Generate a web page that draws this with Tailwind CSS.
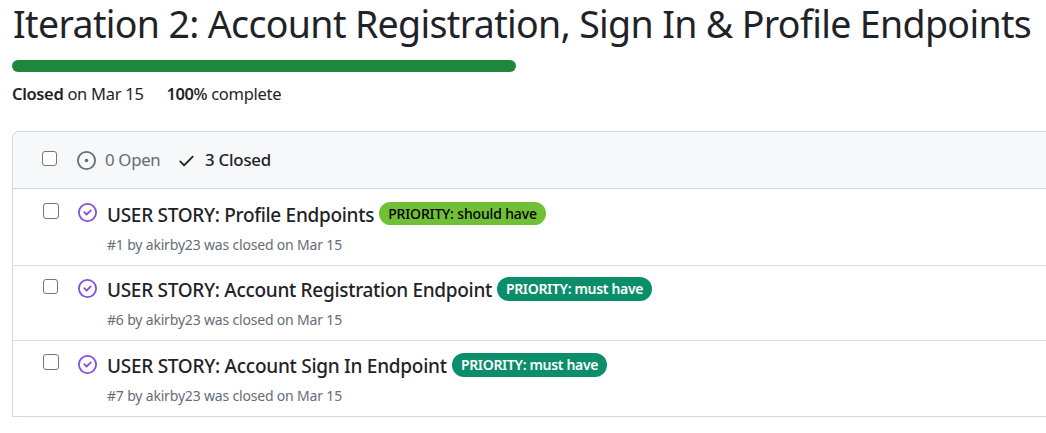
<!DOCTYPE html>
<html lang="en">
<head>
<meta charset="utf-8">
<title>Iteration 2</title>
<script src="https://cdn.jsdelivr.net/npm/@tailwindcss/browser@4"></script>
</head>
<body class="h-[433px] overflow-hidden bg-white pl-3 font-['Noto_Sans','Open_Sans',sans-serif] text-[#1f2328]">
<h1 class="h-[60px] pl-px text-[37.5px] leading-[48px] font-normal tracking-[-0.65px] whitespace-nowrap"><span>Iteration 2: Account Registration, Sign In &amp; Profile Endpoints</span></h1>
<div class="h-3 w-[504px] rounded-full bg-[#1f883d]"></div>
<div class="flex h-[59px] gap-[23px] pt-[10px] text-[16.5px] leading-6 tracking-[-0.28px] whitespace-nowrap">
  <span><b class="font-semibold tracking-[-0.35px]">Closed</b> on Mar 15</span>
  <span><b class="font-semibold tracking-[-0.5px]">100</b><b class="font-medium">%</b> complete</span>
</div>
<div class="h-[286px] overflow-hidden rounded-tl-[7px] border-y border-l border-[#d0d7de]">
  <div class="flex h-[57px] items-center border-b border-[#d0d7de] bg-[#f6f8fa] pl-[29px] text-[16.8px] whitespace-nowrap">
    <span class="mb-[3px] size-[15px] rounded-[3px] border border-[#767676] bg-white"></span>
    <svg class="ml-[20px] size-[19px] fill-[#656d76]" viewBox="0 0 16 16"><path d="M8 9.5a1.5 1.5 0 1 0 0-3 1.5 1.5 0 0 0 0 3Z"/><path d="M8 0a8 8 0 1 1 0 16A8 8 0 0 1 8 0ZM1.5 8a6.5 6.5 0 1 0 13 0 6.5 6.5 0 0 0-13 0Z"/></svg>
    <span class="ml-[9px] w-[72px] tracking-[-0.3px] text-[#656d76]">0 Open</span>
    <svg class="size-[19px] fill-[#1f2328]" viewBox="0 0 16 16"><path d="M13.78 4.22a.75.75 0 0 1 0 1.06l-7.25 7.25a.75.75 0 0 1-1.06 0L2.22 9.28a.751.751 0 0 1 .018-1.042.751.751 0 0 1 1.042-.018L6 10.94l6.72-6.72a.75.75 0 0 1 1.06 0Z"/></svg>
    <span class="ml-[9px] font-medium tracking-[-0.2px]">3 Closed</span>
  </div>
  <div class="flex h-[77px] border-b border-[#d8dee4] pl-[30px]">
    <span class="mt-[14px] size-4 rounded-[3px] border border-[#767676] bg-white"></span>
    <svg class="mt-[14px] ml-[19px] size-[19px] shrink-0 fill-[#8250df]" viewBox="0 0 16 16"><path d="M11.28 6.78a.75.75 0 0 0-1.06-1.06L7.25 8.69 5.78 7.22a.75.75 0 0 0-1.06 1.06l2 2a.75.75 0 0 0 1.06 0l3.5-3.5Z"/><path d="M16 8A8 8 0 1 1 0 8a8 8 0 0 1 16 0Zm-1.5 0a6.5 6.5 0 1 0-13 0 6.5 6.5 0 0 0 13 0Z"/></svg>
    <div class="ml-[10px] whitespace-nowrap">
      <div class="flex h-[46px] pt-[13px]">
        <span class="w-[272px] text-[19px] leading-[27px] font-medium tracking-[-0.3px]">USER STORY: Profile Endpoints</span>
        <span class="h-[23px] w-[167px] rounded-full bg-[#70bf36] text-center text-[14px] leading-[23px] font-medium tracking-[-0.15px] text-black">PRIORITY: should have</span>
      </div>
      <div class="text-[14px] leading-5 tracking-[-0.18px] text-[#656d76]">#1 by akirby23 was closed on Mar 15</div>
    </div>
  </div>
  <div class="flex h-[75px] border-b border-[#d8dee4] pl-[30px]">
    <span class="mt-[13px] size-[15px] rounded-[3px] border border-[#767676] bg-white"></span>
    <svg class="mt-[13px] ml-[20px] size-[19px] shrink-0 fill-[#8250df]" viewBox="0 0 16 16"><path d="M11.28 6.78a.75.75 0 0 0-1.06-1.06L7.25 8.69 5.78 7.22a.75.75 0 0 0-1.06 1.06l2 2a.75.75 0 0 0 1.06 0l3.5-3.5Z"/><path d="M16 8A8 8 0 1 1 0 8a8 8 0 0 1 16 0Zm-1.5 0a6.5 6.5 0 1 0-13 0 6.5 6.5 0 0 0 13 0Z"/></svg>
    <div class="ml-[10px] whitespace-nowrap">
      <div class="flex h-[44px] pt-[11px]">
        <span class="w-[390px] text-[19px] leading-[27px] font-medium tracking-[-0.3px]">USER STORY: Account Registration Endpoint</span>
        <span class="h-6 w-[155px] rounded-full bg-[#0b8e69] text-center text-[14px] leading-6 font-semibold tracking-[-0.33px] text-white">PRIORITY: must have</span>
      </div>
      <div class="text-[14px] leading-5 tracking-[-0.18px] text-[#656d76]">#6 by akirby23 was closed on Mar 15</div>
    </div>
  </div>
  <div class="flex h-[75px] pl-[30px]">
    <span class="mt-[13px] size-4 rounded-[3px] border border-[#767676] bg-white"></span>
    <svg class="mt-[14px] ml-[19px] size-[19px] shrink-0 fill-[#8250df]" viewBox="0 0 16 16"><path d="M11.28 6.78a.75.75 0 0 0-1.06-1.06L7.25 8.69 5.78 7.22a.75.75 0 0 0-1.06 1.06l2 2a.75.75 0 0 0 1.06 0l3.5-3.5Z"/><path d="M16 8A8 8 0 1 1 0 8a8 8 0 0 1 16 0Zm-1.5 0a6.5 6.5 0 1 0-13 0 6.5 6.5 0 0 0 13 0Z"/></svg>
    <div class="ml-[10px] whitespace-nowrap">
      <div class="flex h-[45px] pt-[12px]">
        <span class="w-[345px] text-[19px] leading-[27px] font-medium tracking-[-0.27px]">USER STORY: Account Sign In Endpoint</span>
        <span class="h-6 w-[155px] rounded-full bg-[#0b8e69] text-center text-[14px] leading-6 font-semibold tracking-[-0.33px] text-white">PRIORITY: must have</span>
      </div>
      <div class="text-[14px] leading-5 tracking-[-0.18px] text-[#656d76]">#7 by akirby23 was closed on Mar 15</div>
    </div>
  </div>
</div>
</body>
</html>
